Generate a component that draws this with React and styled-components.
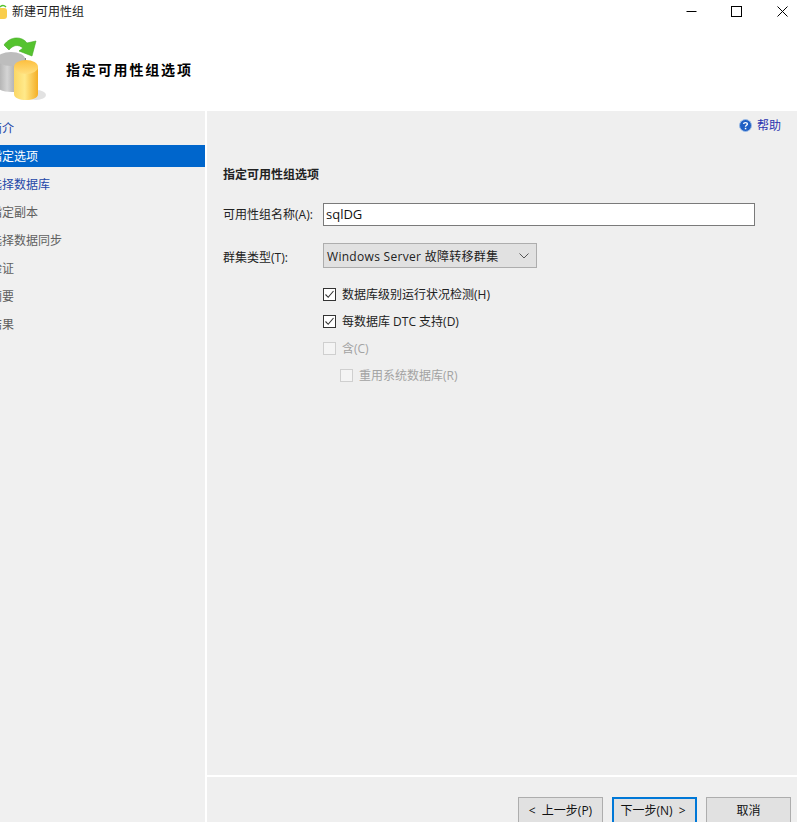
import React from 'react'
import styled, { createGlobalStyle } from 'styled-components'

const GlobalStyle = createGlobalStyle`
  html, body {
    margin: 0;
    padding: 0;
    background: #fff;
    overflow: hidden;
  }
  body {
    font-family: "Open Sans", "Noto Sans CJK SC", sans-serif;
    font-size: 12px;
  }
`

const steps = [
  { label: '简介', tone: 'link' },
  { label: '指定选项', tone: 'active' },
  { label: '选择数据库', tone: 'link' },
  { label: '指定副本', tone: 'idle' },
  { label: '选择数据同步', tone: 'idle' },
  { label: '验证', tone: 'idle' },
  { label: '摘要', tone: 'idle' },
  { label: '结果', tone: 'idle' },
]

const stepColors = { link: '#2447a8', active: '#fff', idle: '#5f5f5f' }

const Window = styled.div`
  width: 797px;
  height: 822px;
  overflow: hidden;
  display: flex;
  flex-direction: column;
`

const TitleBar = styled.div`
  height: 23px;
  flex: none;
  display: flex;
  align-items: center;
  color: #222;
`

const TitleText = styled.span`
  margin-left: 4px;
  line-height: 24px;
`

const TitleIcon = styled.svg`
  width: 8px;
  height: 16px;
  flex: none;
`

const WindowControls = styled.div`
  margin-left: auto;
  margin-right: -8px;
  display: flex;
`

const ControlButton = styled.div`
  width: 45.5px;
  height: 23px;
  display: flex;
  align-items: center;
  justify-content: center;
`

const Header = styled.div`
  height: 88px;
  flex: none;
  display: flex;
  align-items: center;
  background: #fff;
`

const HeaderIcon = styled.svg`
  width: 50px;
  height: 72px;
  flex: none;
  align-self: flex-start;
  margin-top: 7px;
`

const HeaderTitle = styled.h1`
  margin: 3px 0 0 16px;
  font-size: 14px;
  font-weight: 700;
  letter-spacing: 1.85px;
  color: #000;
`

const Body = styled.div`
  flex: 1;
  display: flex;
  min-height: 0;
`

const Sidebar = styled.nav`
  width: 205px;
  flex: none;
  background: #f0f0f0;
  padding-top: 6px;
  display: flex;
  flex-direction: column;
  gap: 6px;
  box-sizing: border-box;
`

const Step = styled.div`
  height: 22px;
  line-height: 24px;
  background: ${(props) => (props.$tone === 'active' ? '#0066cc' : 'transparent')};
  color: ${(props) => stepColors[props.$tone]};
  white-space: nowrap;
`

const StepLabel = styled.span`
  display: block;
  margin-left: -10px;
`

const Main = styled.main`
  flex: 1;
  margin-left: 2px;
  background: #efefef;
  display: flex;
  flex-direction: column;
  min-width: 0;
`

const HelpRow = styled.div`
  display: flex;
  justify-content: flex-end;
  align-items: center;
  gap: 5px;
  height: 28px;
  padding-right: 16px;
  color: #2a35b0;
`

const Content = styled.div`
  flex: 1;
  padding: 27px 0 0 16px;
`

const SectionTitle = styled.h2`
  margin: 0 0 19px;
  font-size: 12px;
  line-height: 18px;
  font-weight: 700;
  color: #222;
`

const FieldRow = styled.div`
  display: flex;
  align-items: center;
  height: ${(props) => props.$height}px;
  margin-bottom: ${(props) => props.$gap || 0}px;
`

const FieldLabel = styled.label`
  width: 100px;
  flex: none;
  color: #222;
  line-height: 24px;
  padding-top: ${(props) => props.$nudge || 0}px;
`

const TextInput = styled.div`
  width: 432px;
  height: 23px;
  box-sizing: border-box;
  border: 1px solid #7a7a7a;
  background: #fff;
  padding-left: 2px;
  font-size: 13px;
  line-height: 21px;
  color: #111;
`

const Select = styled.div`
  width: 214px;
  height: 25px;
  box-sizing: border-box;
  border: 1px solid #adadad;
  background: #e1e1e1;
  padding: 0 7px 0 3px;
  display: flex;
  align-items: center;
  justify-content: space-between;
  font-size: 12px;
  letter-spacing: 0.3px;
  color: #222;
`

const Options = styled.div`
  margin: 17px 0 0 100px;
  display: flex;
  flex-direction: column;
  gap: 9px;
`

const Option = styled.div`
  display: flex;
  align-items: center;
  gap: 6px;
  height: 18px;
  padding-left: ${(props) => (props.$nested ? 17 : 0)}px;
  color: ${(props) => (props.$disabled ? '#a3a3a3' : '#222')};
`

const Checkbox = styled.span`
  width: 13px;
  height: 13px;
  box-sizing: border-box;
  flex: none;
  display: flex;
  border: 1px solid ${(props) => (props.$disabled ? '#cfcfcf' : '#333')};
  background: ${(props) => (props.$disabled ? '#f4f4f4' : '#fff')};
`

const Footer = styled.div`
  height: 47px;
  flex: none;
  border-top: 2px solid #fff;
  display: flex;
  justify-content: flex-end;
  gap: 9px;
  padding: 20px 6px 0 0;
  box-sizing: border-box;
`

const Button = styled.button`
  width: 85px;
  height: 30px;
  box-sizing: border-box;
  margin: 0;
  background: #e1e1e1;
  border: ${(props) => (props.$primary ? '2px solid #0078d7' : '1px solid #adadad')};
  font-family: inherit;
  font-size: 12px;
  word-spacing: 3px;
  color: #111;
  display: flex;
  align-items: flex-start;
  justify-content: center;
  padding: ${(props) => (props.$primary ? '2px 3px 0 0' : '3px 0 0')};
`

const Check = () => (
  <svg width="11" height="11" viewBox="0 0 11 11">
    <path d="M1.5 5.5 L4.2 8.3 L9.5 2" fill="none" stroke="#333" strokeWidth="1.1" />
  </svg>
)

const HelpIcon = () => (
  <svg width="13" height="13" viewBox="0 0 13 13">
    <circle cx="6.5" cy="6.5" r="6" fill="#1f5fc4" stroke="#9dbce6" />
    <path d="M4.6 5 C4.7 3.2 8.4 3.2 8.4 5 C8.4 6.3 6.5 6.2 6.5 7.8" fill="none" stroke="#fff" strokeWidth="1.4" />
    <rect x="5.8" y="8.8" width="1.5" height="1.5" fill="#fff" />
  </svg>
)

const DbIcon = () => (
  <HeaderIcon viewBox="0 30 50 72">
    <defs>
      <linearGradient id="grey" x1="0" x2="1" y1="0" y2="0">
        <stop offset="0" stopColor="#a9a9a9" />
        <stop offset="0.35" stopColor="#d4d4d4" />
        <stop offset="1" stopColor="#7f7f7f" />
      </linearGradient>
      <linearGradient id="gold" x1="0" x2="1" y1="0" y2="0">
        <stop offset="0" stopColor="#fbd765" />
        <stop offset="0.45" stopColor="#ffe98a" />
        <stop offset="1" stopColor="#f4ae25" />
      </linearGradient>
      <linearGradient id="goldTop" x1="0" x2="0" y1="0" y2="1">
        <stop offset="0" stopColor="#fdbf3f" />
        <stop offset="1" stopColor="#ffdf7d" />
      </linearGradient>
    </defs>
    <ellipse cx="36" cy="95" rx="10" ry="5" fill="#e2e2e2" />
    <path d="M-3 58 V86 C-3 94 26 94 26 86 V58 Z" fill="url(#grey)" />
    <ellipse cx="11" cy="59" rx="14" ry="7" fill="#bdbdbd" />
    <path d="M14 67 V94 C14 102 38 102 38 94 V67 Z" fill="url(#gold)" />
    <ellipse cx="26" cy="67" rx="12" ry="7" fill="url(#goldTop)" />
    <path d="M4 45 C10 36 22 36 27 43 L36 41 L32 56 L19 51 L23 48 C18 44 13 45 9 50 Z" fill="#55c32f" stroke="#43ab22" strokeWidth="0.6" />
  </HeaderIcon>
)

export default function App() {
  return (
    <Window>
      <GlobalStyle />
      <TitleBar>
        <TitleIcon viewBox="0 0 8 16">
          <rect x="-3" y="4" width="10" height="11" rx="3" fill="#f9cd4c" />
          <path d="M0 3 C2 1 4 1 6 3" fill="none" stroke="#55c32f" strokeWidth="1.5" />
        </TitleIcon>
        <TitleText>新建可用性组</TitleText>
        <WindowControls>
          <ControlButton>
            <svg width="11" height="11" viewBox="0 0 11 11">
              <path d="M0.5 5.5 H10.5" stroke="#000" />
            </svg>
          </ControlButton>
          <ControlButton>
            <svg width="11" height="11" viewBox="0 0 11 11">
              <rect x="0.5" y="0.5" width="10" height="10" fill="none" stroke="#000" />
            </svg>
          </ControlButton>
          <ControlButton>
            <svg width="11" height="11" viewBox="0 0 11 11">
              <path d="M0.5 0.5 L10.5 10.5 M10.5 0.5 L0.5 10.5" stroke="#000" />
            </svg>
          </ControlButton>
        </WindowControls>
      </TitleBar>
      <Header>
        <DbIcon />
        <HeaderTitle>指定可用性组选项</HeaderTitle>
      </Header>
      <Body>
        <Sidebar>
          {steps.map((step) => (
            <Step key={step.label} $tone={step.tone}>
              <StepLabel>{step.label}</StepLabel>
            </Step>
          ))}
        </Sidebar>
        <Main>
          <HelpRow>
            <HelpIcon />
            <span>帮助</span>
          </HelpRow>
          <Content>
            <SectionTitle>指定可用性组选项</SectionTitle>
            <FieldRow $height={23} $gap={17}>
              <FieldLabel>可用性组名称(A):</FieldLabel>
              <TextInput>sqlDG</TextInput>
            </FieldRow>
            <FieldRow $height={25}>
              <FieldLabel $nudge={4}>群集类型(T):</FieldLabel>
              <Select>
                <span>Windows Server 故障转移群集</span>
                <svg width="10" height="6" viewBox="0 0 10 6">
                  <path d="M0.5 0.5 L5 5 L9.5 0.5" fill="none" stroke="#555" />
                </svg>
              </Select>
            </FieldRow>
            <Options>
              <Option>
                <Checkbox><Check /></Checkbox>
                数据库级别运行状况检测(H)
              </Option>
              <Option>
                <Checkbox><Check /></Checkbox>
                每数据库 DTC 支持(D)
              </Option>
              <Option $disabled>
                <Checkbox $disabled />
                含(C)
              </Option>
              <Option $disabled $nested>
                <Checkbox $disabled />
                重用系统数据库(R)
              </Option>
            </Options>
          </Content>
          <Footer>
            <Button>&lt; 上一步(P)</Button>
            <Button $primary>下一步(N) &gt;</Button>
            <Button>取消</Button>
          </Footer>
        </Main>
      </Body>
    </Window>
  )
}
